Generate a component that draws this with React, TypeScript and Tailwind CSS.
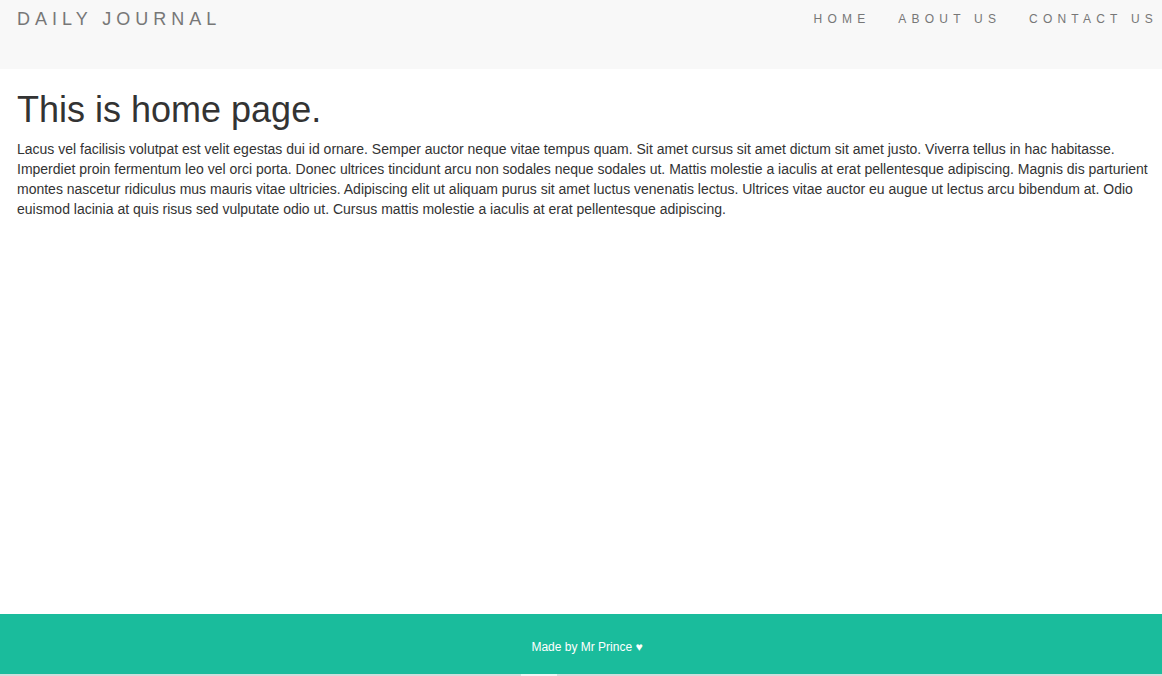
export default function App() {
	const body =
		"Lacus vel facilisis volutpat est velit egestas dui id ornare. Semper auctor neque vitae tempus quam. Sit amet cursus sit amet dictum sit amet justo. Viverra tellus in hac habitasse. Imperdiet proin fermentum leo vel orci porta. Donec ultrices tincidunt arcu non sodales neque sodales ut. Mattis molestie a iaculis at erat pellentesque adipiscing. Magnis dis parturient montes nascetur ridiculus mus mauris vitae ultricies. Adipiscing elit ut aliquam purus sit amet luctus venenatis lectus. Ultrices vitae auctor eu augue ut lectus arcu bibendum at. Odio euismod lacinia at quis risus sed vulputate odio ut. Cursus mattis molestie a iaculis at erat pellentesque adipiscing.";

	return (
		<div className="h-[676px] flex flex-col bg-white font-['Liberation_Sans',Arial,sans-serif] text-[#333]">
			<nav className="h-[69px] bg-[#f8f8f8] flex items-start justify-between">
				<div className="pl-[17px] pt-[7px] text-[18px] leading-[24px] tracking-[5px] text-[#777]">
					DAILY JOURNAL
				</div>
				<ul className="flex gap-[28px] pt-[11px] pr-[4px] text-[12px] leading-[16px] tracking-[5.2px] text-[#777]">
					<li>HOME</li>
					<li>ABOUT US</li>
					<li>CONTACT US</li>
				</ul>
			</nav>

			<main className="flex-1 pl-[17px] pr-[13px]">
				<h1 className="mt-[21px] text-[36px] leading-[40px] font-normal">This is home page.</h1>
				<p className="mt-[9px] text-[14px] leading-[20px]">{body}</p>
			</main>

			<footer className="h-[60px] bg-[#1abc9c] flex items-center justify-center pt-[6px] pl-[12px]">
				<p className="text-white text-[12px] leading-[16px]">Made by Mr Prince ♥</p>
			</footer>
			<div className="h-[2px] bg-[#d0dedb] flex">
				<div className="ml-[521px] w-[36px] bg-[#eef5f3]" />
			</div>
		</div>
	);
}
